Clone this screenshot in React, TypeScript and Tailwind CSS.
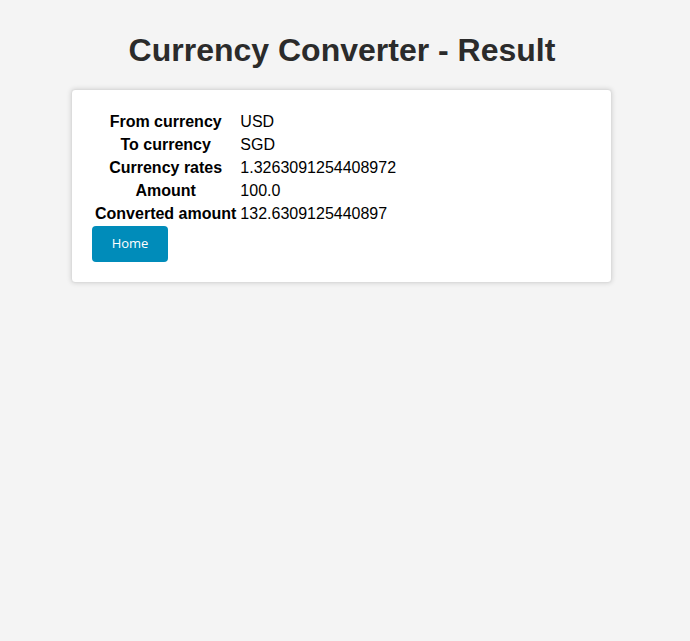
export default function App() {
  const rows: [string, string][] = [
    ["From currency", "USD"],
    ["To currency", "SGD"],
    ["Currency rates", "1.3263091254408972"],
    ["Amount", "100.0"],
    ["Converted amount", "132.6309125440897"],
  ];
  return (
    <div className="min-h-[641px] bg-[#f4f4f4] pt-[32px] font-['Liberation_Sans',Arial,sans-serif]">
      <div className="w-[684px]">
        <h1 className="text-center text-[32px] font-bold leading-[37px] text-[#2b2b2b]">
          Currency Converter - Result
        </h1>
        <div className="ml-[71px] mt-[20px] w-[541px] rounded-[4px] border border-[#dcdcdc] bg-white px-[20px] pb-[20px] pt-[19px] shadow-[0_0_5px_rgba(0,0,0,0.15)]">
          <table className="border-separate border-spacing-[2px] text-[16px] text-black">
            <tbody>
              {rows.map(([k, v]) => (
                <tr key={k}>
                  <th className="p-px text-center font-bold leading-[19px]">{k}</th>
                  <td className="p-px text-left leading-[19px]">{v}</td>
                </tr>
              ))}
            </tbody>
          </table>
          <button className="flex h-[36px] w-[76px] items-center justify-center rounded-[4px] bg-[#008cba] font-['Open_Sans',sans-serif] text-[13px] text-white">
            Home
          </button>
        </div>
      </div>
    </div>
  );
}
